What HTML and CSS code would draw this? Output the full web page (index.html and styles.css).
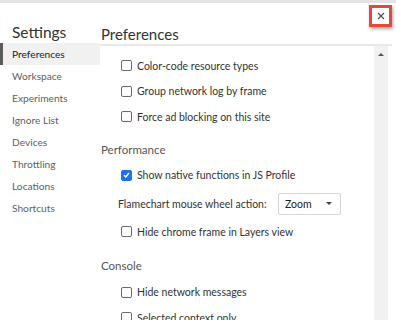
FILE: index.html
```html
<!DOCTYPE html>
<html lang="en">
<head>
    <meta charset="UTF-8">
    <title>Settings</title>
    <link rel="stylesheet" href="styles.css">
</head>
<body>
    <div class="topbar"></div>
    <div class="settings">
        <aside class="sidebar">
            <h1 class="sidebar-title">Settings</h1>
            <ul class="nav">
                <li class="nav-item selected">Preferences</li>
                <li class="nav-item">Workspace</li>
                <li class="nav-item">Experiments</li>
                <li class="nav-item">Ignore List</li>
                <li class="nav-item">Devices</li>
                <li class="nav-item">Throttling</li>
                <li class="nav-item">Locations</li>
                <li class="nav-item">Shortcuts</li>
            </ul>
        </aside>
        <main class="panel">
            <header class="panel-header">
                <h2 class="panel-title">Preferences</h2>
                <button class="close-btn" aria-label="Close">
                    <svg width="8" height="8" viewBox="0 0 8 8">
                        <path d="M1 1 L7 7 M7 1 L1 7" stroke="#555" stroke-width="1.3" fill="none"/>
                    </svg>
                </button>
            </header>
            <div class="panel-body">
                <div class="content">
                    <label class="check"><span class="box"></span>Color-code resource types</label>
                    <label class="check"><span class="box"></span>Group network log by frame</label>
                    <label class="check"><span class="box"></span>Force ad blocking on this site</label>

                    <h3 class="section">Performance</h3>
                    <label class="check"><span class="box checked">
                        <svg width="10" height="10" viewBox="0 0 10 10">
                            <path d="M2.2 5.2 L4.2 7.2 L7.8 2.8" stroke="#fff" stroke-width="1.6" fill="none"/>
                        </svg>
                    </span>Show native functions in JS Profile</label>
                    <div class="select-row">
                        <span class="select-label">Flamechart mouse wheel action:</span>
                        <div class="select">Zoom<span class="caret"></span></div>
                    </div>
                    <label class="check"><span class="box"></span>Hide chrome frame in Layers view</label>

                    <h3 class="section section-console">Console</h3>
                    <label class="check"><span class="box"></span>Hide network messages</label>
                    <label class="check"><span class="box"></span>Selected context only</label>
                </div>
                <div class="scrollbar">
                    <span class="arrow-up"></span>
                </div>
            </div>
        </main>
    </div>
</body>
</html>
```

FILE: styles.css
```css
* {
    margin: 0;
    padding: 0;
    box-sizing: border-box;
}

body {
    font-family: 'Segoe UI', Lato, 'Noto Sans', sans-serif;
    font-size: 10.5px;
    color: #333;
    background: #fff;
    height: 320px;
    overflow: hidden;
}

.topbar {
    height: 3px;
    background: #e4e4e4;
}

.settings {
    display: flex;
    height: 317px;
}

.sidebar {
    width: 100px;
    flex-shrink: 0;
}

.sidebar-title {
    font-size: 15.5px;
    font-weight: 400;
    color: #333;
    padding: 18px 0 0 12px;
    height: 40px;
    line-height: 22px;
}

.nav {
    list-style: none;
}

.nav-item {
    height: 22px;
    line-height: 22px;
    padding-left: 12px;
    font-size: 10.2px;
    color: #5f5f5f;
}

.nav-item.selected {
    background: #f1f1f1;
    color: #222;
    border-left: 3px solid #5c5c5c;
    padding-left: 9px;
}

.panel {
    flex: 1;
    display: flex;
    flex-direction: column;
    min-width: 0;
}

.panel-header {
    display: flex;
    justify-content: space-between;
    align-items: flex-start;
    height: 43px;
    border-bottom: 2px solid #e8e8e8;
    margin-right: 4px;
}

.panel-title {
    font-size: 15px;
    font-weight: 400;
    color: #333;
    padding: 18px 0 0 1px;
    line-height: 26px;
}

.close-btn {
    width: 23px;
    height: 22px;
    margin-top: 2px;
    border: 3px solid #e5493a;
    background: #fff;
    display: flex;
    align-items: center;
    justify-content: center;
    box-shadow: 1px 2px 3px rgba(0, 0, 0, 0.35);
}

.panel-body {
    flex: 1;
    display: flex;
    min-height: 0;
}

.content {
    flex: 1;
    padding: 7px 0 0 1px;
}

.check {
    display: flex;
    align-items: center;
    height: 25.5px;
    padding-left: 20px;
    color: #333;
}

.box {
    width: 11px;
    height: 11px;
    border: 1px solid #6b6b6b;
    border-radius: 2px;
    margin-right: 5px;
    display: flex;
    align-items: center;
    justify-content: center;
}

.box.checked {
    background: #1a73e8;
    border-color: #1a73e8;
}

.section {
    font-size: 11.5px;
    font-weight: 400;
    color: #555;
    margin-top: 8px;
    height: 25px;
    padding-bottom: 1px;
    line-height: 24px;
}

.section-console {
    margin-top: 9px;
    padding-bottom: 2px;
    height: 26px;
}

.select-row {
    display: flex;
    align-items: center;
    height: 31px;
    padding-left: 17px;
    color: #333;
}

.select-label {
    width: 160px;
}

.select {
    width: 63px;
    height: 22px;
    border: 1px solid #d4d4d4;
    border-radius: 2px;
    display: flex;
    align-items: center;
    justify-content: space-between;
    padding: 0 8px 0 6px;
    color: #222;
}

.caret {
    width: 0;
    height: 0;
    border-left: 3px solid transparent;
    border-right: 3px solid transparent;
    border-top: 3px solid #444;
}

.scrollbar {
    width: 14px;
    margin-right: 8px;
    background: #f1f1f1;
    display: flex;
    justify-content: center;
    padding-top: 7px;
}

.arrow-up {
    width: 0;
    height: 0;
    border-left: 3px solid transparent;
    border-right: 3px solid transparent;
    border-bottom: 3px solid #555;
}
```
